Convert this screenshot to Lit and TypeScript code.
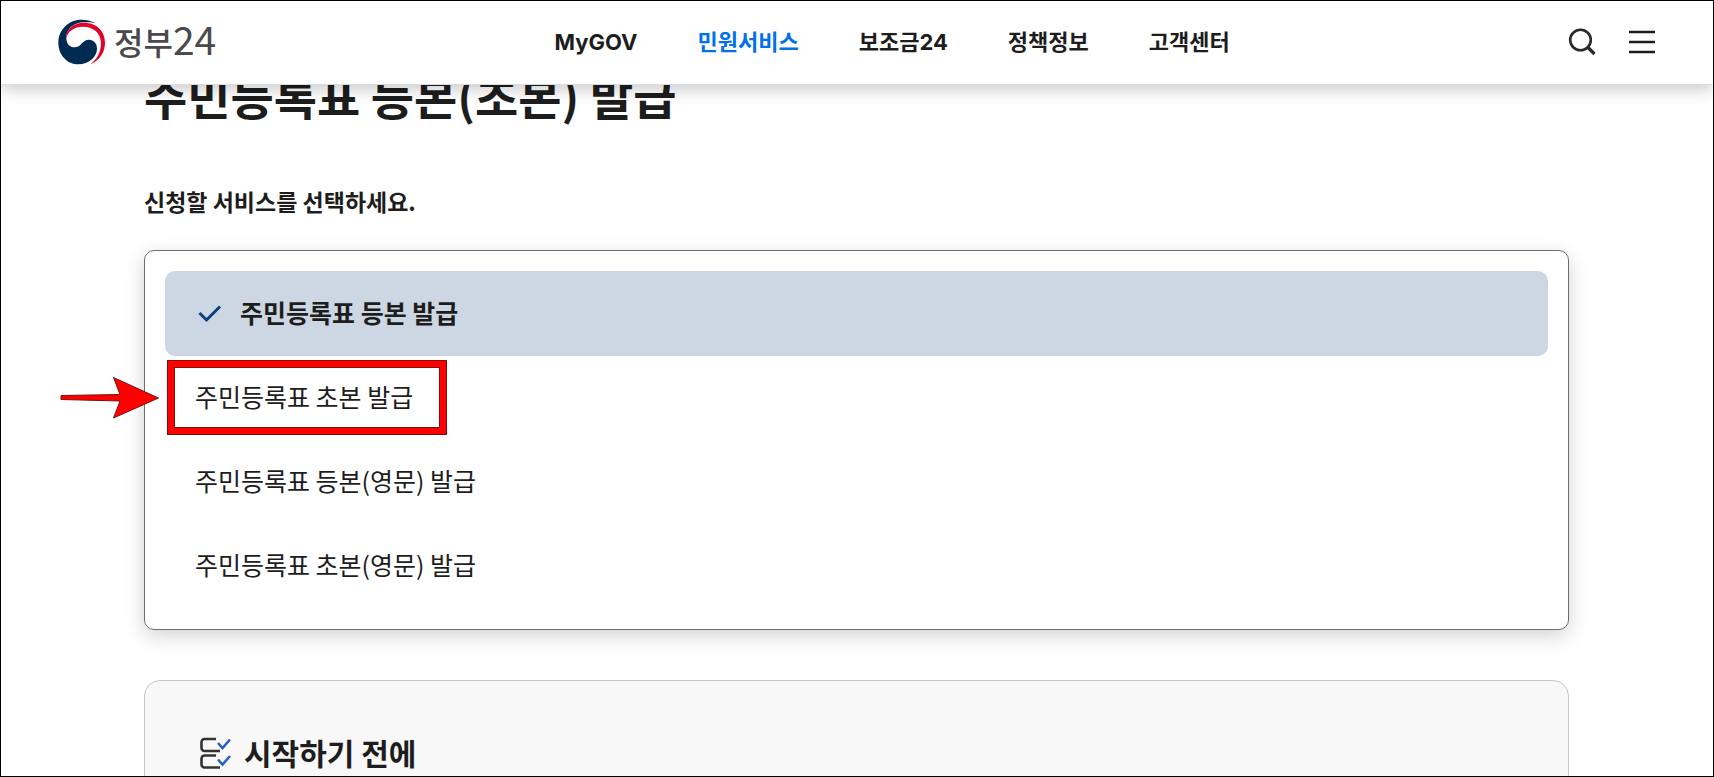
import { LitElement, html, css, svg } from "lit";
import { customElement, state } from "lit/decorators.js";
import { classMap } from "lit/directives/class-map.js";

const MENU = ["MyGOV", "민원서비스", "보조금24", "정책정보", "고객센터"];

const SERVICES = [
  "주민등록표 등본 발급",
  "주민등록표 초본 발급",
  "주민등록표 등본(영문) 발급",
  "주민등록표 초본(영문) 발급",
];

const emblem = svg`
  <path fill="#002b50" d="M286 68C272 60 257 57 243 57C204 57 174 88 174 126C174 164 202 191 234 191C266 191 290 168 290 144C290 128 280 117 266 117C244 117 244 140 222 140C207 140 198 128 198 112C198 84 222 65 250 65C263 64 275 64 286 68Z"/>
  <path fill="#e4002b" d="M198 112C196 86 220 66 250 66C290 66 314 92 314 126C314 155 297 180 270 191C290 176 302 154 302 128C302 98 280 78 248 78C222 78 202 92 198 112Z"/>`;

@customElement("app-root")
export class AppRoot extends LitElement {
  static styles = css`
    :host {
      display: block;
      box-sizing: border-box;
      height: 100vh;
      overflow: hidden;
      border: 1px solid #000;
      background: #fff;
      color: #1d1d1d;
      font-family: "Noto Sans CJK KR", "Noto Sans", sans-serif;
    }
    * {
      box-sizing: border-box;
    }
    svg {
      display: block;
      fill: none;
    }
    button {
      border: 0;
      padding: 0;
      background: none;
      color: inherit;
      font: inherit;
      cursor: pointer;
    }
    .header {
      position: relative;
      z-index: 2;
      display: flex;
      align-items: center;
      justify-content: space-between;
      height: 84px;
      padding: 0 57px 2px;
      background: #fff;
      border-bottom: 1px solid #d8dce6;
      box-shadow: 0 4px 16px rgba(0, 0, 0, 0.22);
    }
    .logo {
      display: flex;
      align-items: center;
      gap: 8px;
      color: #4a4a4c;
      text-decoration: none;
    }
    .wordmark {
      display: flex;
      align-items: baseline;
      padding-bottom: 4px;
      font-size: 32px;
      line-height: 40px;
      font-weight: 500;
    }
    .digits {
      font-size: 39px;
      font-weight: 400;
    }
    .menu {
      display: flex;
      gap: 60px;
      margin: 0;
      padding: 0;
      list-style: none;
      font-family: "Inter", "Noto Sans CJK KR", sans-serif;
      font-size: 22px;
      line-height: 32px;
      font-weight: 700;
    }
    .menu a {
      color: inherit;
      text-decoration: none;
    }
    .menu .active {
      color: #0071e9;
    }
    .tools {
      display: flex;
      gap: 32px;
    }
    .main {
      padding: 0 144px 0 143px;
    }
    .title {
      margin: -24px 0 0;
      font-size: 47px;
      line-height: 68px;
      font-weight: 700;
    }
    .prompt {
      margin: 56px 0 0;
      font-size: 23px;
      line-height: 32px;
      font-weight: 700;
    }
    .services {
      margin: 33px 0 0;
      padding: 20px 20px 21px;
      list-style: none;
      border: 1px solid #6d6d6f;
      border-radius: 10px;
      box-shadow: 0 6px 20px rgba(0, 0, 0, 0.18);
    }
    .row {
      position: relative;
    }
    .service {
      display: flex;
      align-items: center;
      gap: 17px;
      width: 100%;
      min-height: 84px;
      padding: 0 30px 4px;
      border-radius: 10px;
      font-size: 25px;
      line-height: 36px;
      text-align: left;
    }
    .service.selected {
      min-height: 85px;
      background: #cdd7e4;
      font-weight: 700;
    }
    .marker {
      position: absolute;
      left: -106px;
      top: 4px;
      pointer-events: none;
    }
    .before {
      display: flex;
      align-items: flex-start;
      gap: 11px;
      height: 320px;
      margin-top: 50px;
      padding: 49px 54px;
      border: 1px solid #c6c6c6;
      border-radius: 16px;
      background: #f8f8f8;
    }
    .before svg {
      margin-top: 6px;
    }
    .before h2 {
      margin: 0;
      font-size: 30px;
      line-height: 44px;
      font-weight: 700;
    }
  `;

  @state() private selected = 0;

  private renderService(name: string, index: number) {
    const on = index === this.selected;
    return html`
      <li class="row">
        <button
          class=${classMap({ service: true, selected: on })}
          aria-pressed=${on ? "true" : "false"}
          @click=${() => (this.selected = index)}
        >
          ${on
            ? html`<svg width="28" height="28" viewBox="0 0 28 28" aria-hidden="true">
                <path d="M4.500 15l7 7L25 8.500" stroke="#0b3f80" stroke-width="3" />
              </svg>`
            : null}
          <span>${name}</span>
        </button>
        ${index === 1
          ? html`<svg class="marker" width="390" height="77" viewBox="0 0 390 77" aria-hidden="true">
              <path
                d="M2 35.500L61 34.500L54.500 17.500L99.500 38L54.500 58L61 41L2 39.500Z"
                fill="#f00"
                stroke="#7a1010"
                stroke-width="1"
              />
              <rect x="112" y="4" width="272" height="67" stroke="#7a1010" stroke-width="8" />
              <rect x="112" y="4" width="272" height="67" stroke="#f00" stroke-width="6" />
            </svg>`
          : null}
      </li>
    `;
  }

  render() {
    return html`
      <header class="header">
        <a class="logo" href="#">
          <svg width="48" height="46" viewBox="173 55 144 138" aria-hidden="true">${emblem}</svg>
          <span class="wordmark">정부<span class="digits">24</span></span>
        </a>
        <nav>
          <ul class="menu">
            ${MENU.map(
              (item, i) => html`<li><a class=${classMap({ active: i === 1 })} href="#">${item}</a></li>`
            )}
          </ul>
        </nav>
        <div class="tools">
          <button aria-label="검색">
            <svg width="28" height="28" viewBox="0 0 28 28" stroke="#2a2a2a" stroke-width="2.600">
              <circle cx="12.500" cy="12" r="10.300" />
              <path d="M19.500 19l7 7" stroke-width="3.200" />
            </svg>
          </button>
          <button aria-label="전체메뉴">
            <svg width="28" height="28" viewBox="0 0 28 28" stroke="#1d1d1d" stroke-width="2.600">
              <path d="M1 4h26M1 14h26M1 24h26" />
            </svg>
          </button>
        </div>
      </header>
      <main class="main">
        <h1 class="title">주민등록표 등본(초본) 발급</h1>
        <p class="prompt">신청할 서비스를 선택하세요.</p>
        <ul class="services">
          ${SERVICES.map((name, i) => this.renderService(name, i))}
        </ul>
        <section class="before">
          <svg width="34" height="34" viewBox="0 0 34 34" stroke-width="2.600" aria-hidden="true">
            <path
              d="M17 3H5.500a3 3 0 0 0-3 3v6a3 3 0 0 0 3 3H21M17 19.500H5.500a3 3 0 0 0-3 3v6a3 3 0 0 0 3 3H21"
              stroke="#333"
            />
            <path d="M19 7l4.500 5L31 3.500M19 23.500l4.500 5L31 20" stroke="#2a5fc8" />
          </svg>
          <h2>시작하기 전에</h2>
        </section>
      </main>
    `;
  }
}
